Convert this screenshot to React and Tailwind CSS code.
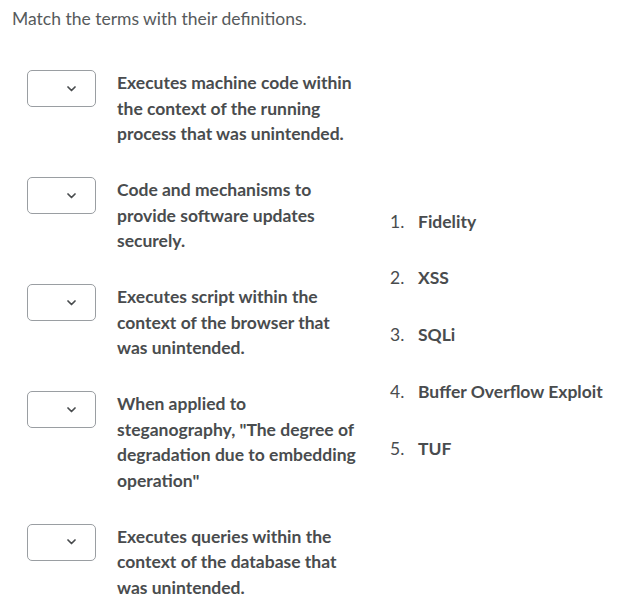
import React from 'react';

const definitions = [
  'Executes machine code within the context of the running process that was unintended.',
  'Code and mechanisms to provide software updates securely.',
  'Executes script within the context of the browser that was unintended.',
  'When applied to steganography, "The degree of degradation due to embedding operation"',
  'Executes queries within the context of the database that was unintended.',
];

const terms = ['Fidelity', 'XSS', 'SQLi', 'Buffer Overflow Exploit', 'TUF'];

const SelectBox = () => (
  <div className="w-[69px] h-[37px] shrink-0 rounded-[5px] border border-[#9a9ea2] bg-white flex items-center justify-end pr-[19px]">
    <svg width="9" height="6" viewBox="0 0 9 6" fill="none">
      <path d="M1 1l3.5 3.5L8 1" stroke="#494c4e" strokeWidth="1.7" strokeLinecap="round" strokeLinejoin="round" />
    </svg>
  </div>
);

export default function App() {
  return (
    <div className="w-[636px] h-[615px] bg-white text-[#494c4e] pl-[12px] pt-[6px]" style={{ fontFamily: 'Lato, "Open Sans", sans-serif' }}>
      <p className="text-[17.5px] leading-[26px] text-[#565a5c]">Match the terms with their definitions.</p>

      <div className="flex items-center mt-[38px]">
        <div className="flex flex-col gap-[30.5px] pl-[15px]">
          {definitions.map((d, i) => (
            <div key={i} className="flex items-start">
              <SelectBox />
              <p className="ml-[21px] w-[242px] text-[17.5px] leading-[25.5px] font-bold">{d}</p>
            </div>
          ))}
        </div>

        <ol className="ml-[31px] flex flex-col gap-[30.75px]">
          {terms.map((t, i) => (
            <li key={i} className="flex text-[17.5px] leading-[26px]">
              <span className="w-[28px]">{i + 1}.</span>
              <span className="font-bold">{t}</span>
            </li>
          ))}
        </ol>
      </div>
    </div>
  );
}
